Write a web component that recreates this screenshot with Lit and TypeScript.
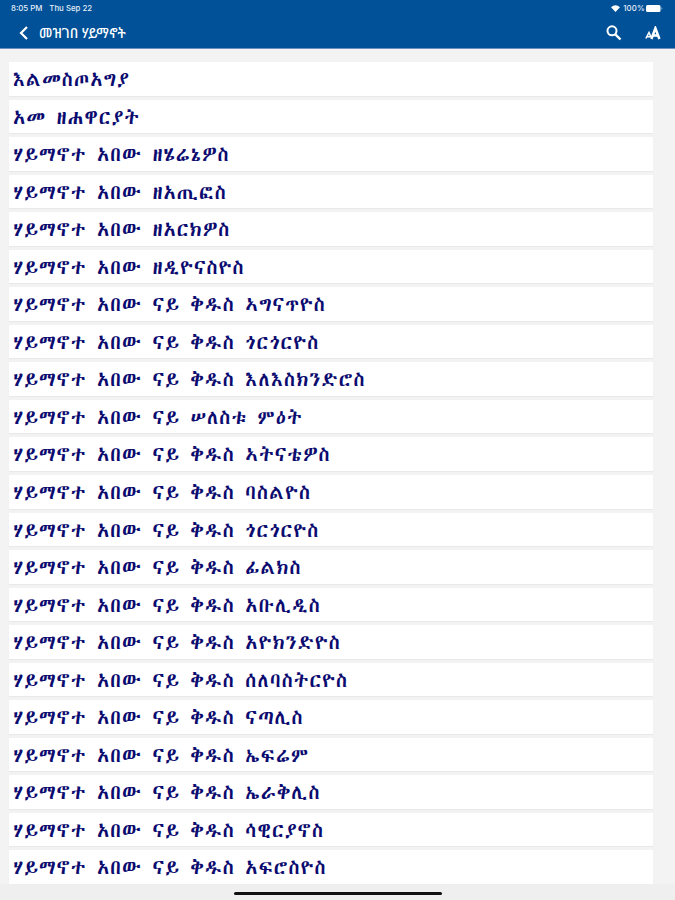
import { LitElement, html, css } from "lit";
import { customElement } from "lit/decorators.js";

const ITEMS = [
  "እልመስጦአግያ",
  "አመ ዘሐዋርያት",
  "ሃይማኖተ አበው ዘሄሬኔዎስ",
  "ሃይማኖተ አበው ዘአጢፎስ",
  "ሃይማኖተ አበው ዘአርክዎስ",
  "ሃይማኖተ አበው ዘዲዮናስዮስ",
  "ሃይማኖተ አበው ናይ ቅዱስ ኣግናጥዮስ",
  "ሃይማኖተ አበው ናይ ቅዱስ ጎርጎርዮስ",
  "ሃይማኖተ አበው ናይ ቅዱስ እለእስክንድሮስ",
  "ሃይማኖተ አበው ናይ ሠለስቱ ምዕት",
  "ሃይማኖተ አበው ናይ ቅዱስ ኣትናቴዎስ",
  "ሃይማኖተ አበው ናይ ቅዱስ ባስልዮስ",
  "ሃይማኖተ አበው ናይ ቅዱስ ጎርጎርዮስ",
  "ሃይማኖተ አበው ናይ ቅዱስ ፊልክስ",
  "ሃይማኖተ አበው ናይ ቅዱስ አቡሊዲስ",
  "ሃይማኖተ አበው ናይ ቅዱስ አዮክንድዮስ",
  "ሃይማኖተ አበው ናይ ቅዱስ ሰለባስትርዮስ",
  "ሃይማኖተ አበው ናይ ቅዱስ ናጣሊስ",
  "ሃይማኖተ አበው ናይ ቅዱስ ኤፍሬም",
  "ሃይማኖተ አበው ናይ ቅዱስ ኤራቅሊስ",
  "ሃይማኖተ አበው ናይ ቅዱስ ሳዊርያኖስ",
  "ሃይማኖተ አበው ናይ ቅዱስ አፍሮስዮስ",
];

@customElement("app-root")
export class AppRoot extends LitElement {
  static styles = css`
    :host {
      display: flex;
      flex-direction: column;
      height: 900px;
      overflow: hidden;
      background: #f3f3f3;
    }
    header {
      flex: none;
      height: 49px;
      box-sizing: border-box;
      background: #015198;
      border-bottom: 1px solid #6d8fbd;
      color: #fff;
    }
    .status {
      display: flex;
      align-items: center;
      height: 16px;
      padding: 0 12px 0 11px;
      font: 500 7.8px/16px Inter, sans-serif;
      color: #e6eef8;
    }
    .date { margin-left: 7px; }
    .wifi { margin-left: auto; margin-right: 3px; }
    .battery { margin-left: 1px; }
    .status .pct { letter-spacing: 0.2px; }
    .bar {
      display: flex;
      align-items: center;
      height: 33px;
      padding: 0 14px 0 18px;
    }
    .title {
      margin-left: 9px;
      font: 500 13.6px/32px "Noto Sans Ethiopic", "Noto Sans", sans-serif;
      white-space: nowrap;
    }
    .search { margin-left: auto; }
    .font-size { margin-left: 23px; }
    svg { display: block; flex: none; }
    ul {
      list-style: none;
      margin: 0;
      padding: 13px 22px 0 9px;
      flex: none;
      display: flex;
      flex-direction: column;
      gap: 4.05px;
    }
    li {
      height: 33.5px;
      box-sizing: border-box;
      padding: 1px 0 0 4px;
      background: #fff;
      box-shadow: 0 1px 1px #e9e9eb;
      color: #0b0b70;
      font: 400 20px/33.5px "Abyssinica SIL", serif;
      letter-spacing: 1.1px;
      word-spacing: 0.4px;
      white-space: nowrap;
    }
    footer {
      flex: 1;
      display: flex;
      justify-content: center;
      align-items: center;
      padding-top: 4px;
      background: #efefef;
    }
    .home {
      width: 208px;
      height: 3px;
      border-radius: 2px;
      background: #111;
    }
  `;

  render() {
    return html`
      <header>
        <div class="status">
          <span>8:05 PM</span><span class="date">Thu Sep 22</span>
          <svg class="wifi" width="9" height="7" viewBox="0 0 9 7" fill="#fff">
            <path d="M0 2.2Q4.5-1.6 9 2.2L4.5 7Z" />
          </svg>
          <span class="pct">100%</span>
          <svg class="battery" width="17" height="7" viewBox="0 0 17 7" fill="#fff">
            <rect width="14.5" height="7" rx="1.5" />
            <path d="M15.5 2.3q1.6 1.2 0 2.4z" opacity=".7" />
          </svg>
        </div>
        <div class="bar">
          <svg width="12" height="16" viewBox="0 0 12 16" fill="none" stroke="#fff" stroke-width="2.2">
            <path d="M9 2L3 8l6 6" />
          </svg>
          <span class="title">መዝገበ ሃይማኖት</span>
          <svg class="search" width="16" height="16" viewBox="0 0 16 16" fill="none" stroke="#fff">
            <circle cx="6" cy="5.8" r="4.5" stroke-width="2" />
            <path d="M9.3 9.3l5.2 5.2" stroke-width="2.4" />
          </svg>
          <svg class="font-size" width="16" height="14" viewBox="0 0 16 14" fill="none" stroke="#fff">
            <path d="M.9 12.5L4 6.5l2 4.5M2 10.8h4" stroke-width="1.6" />
            <path d="M6.4 13L10.4 2.2l4 10.8M7.6 9.6h5.6" stroke-width="2.5" />
          </svg>
        </div>
      </header>
      <ul>${ITEMS.map((t) => html`<li>${t}</li>`)}</ul>
      <footer><div class="home"></div></footer>
    `;
  }
}
